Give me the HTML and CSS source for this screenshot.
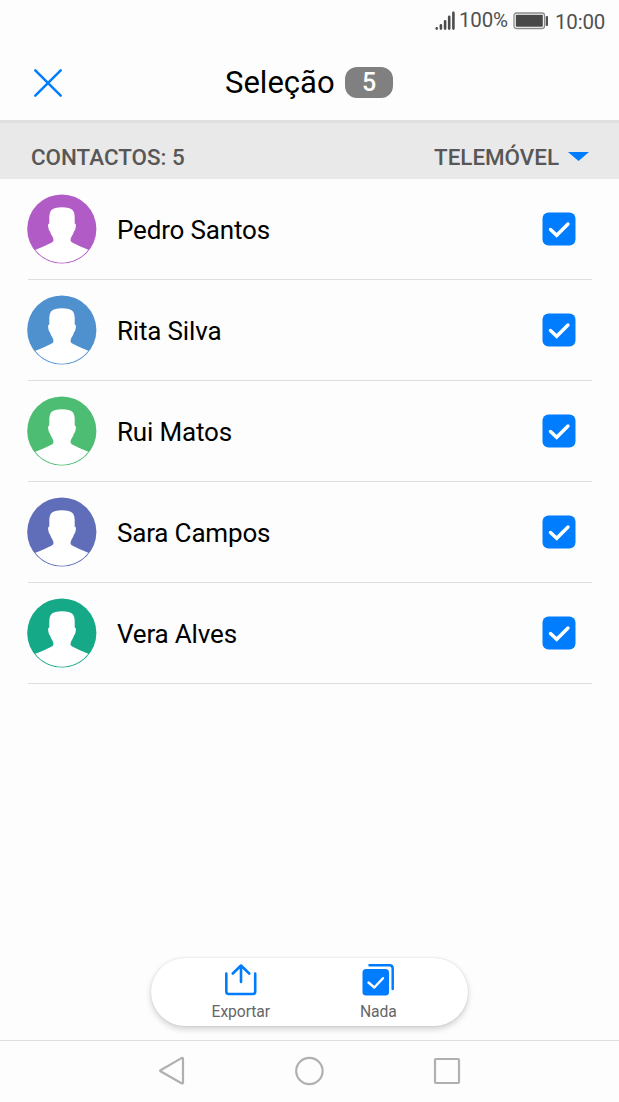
FILE: index.html
```html
<!DOCTYPE html>
<html lang="pt">
<head>
<meta charset="utf-8">
<title>Seleção</title>
<link rel="stylesheet" href="styles.css">
</head>
<body>
<svg class="defs" width="0" height="0">
  <symbol id="person" viewBox="0 0 70 70">
    <circle cx="34.800" cy="35" r="34.600" fill="currentColor"/>
    <path fill="#fff" d="M35 13.300C40 13.300 44 14 46 16.500Q47.800 19 47.700 23V29.500Q49.300 29.500 48.800 32.500Q48.200 36.800 47.200 37Q46.300 40 44.500 42.700Q43.500 44.500 43.500 46.500Q44 48 46.200 49Q52 52.200 61.300 55.700A33.600 33.600 0 0 1 8.300 55.700Q18 52.200 23.800 49Q26 48 26.500 46.500Q26.500 44.500 25.500 42.700Q23.700 40 22.800 37Q21.800 36.800 21.200 32.500Q20.700 29.500 22.300 29.500V23Q22.200 19 24 16.500C26 14 30 13.300 35 13.300Z"/>
  </symbol>
  <symbol id="check" viewBox="0 0 34 34">
    <rect x=".5" y=".5" width="33" height="33" rx="6" fill="#007dff"/>
    <path d="M8.500 17.500L14.700 23.300L26 12" fill="none" stroke="#fff" stroke-width="3.400" stroke-linecap="round"/>
  </symbol>
</svg>
<div class="screen">
  <div class="status">
    <svg class="signal" width="20" height="19" viewBox="0 0 20 19" stroke="#4c4c4c" stroke-width="2.600" stroke-linecap="round"><path d="M1.700 17.200V17.600M5.900 14.200V17.600M10.100 10.200V17.600M14.200 5.700V17.600M18.400 1.700V17.600"/></svg>
    <span class="percent">100%</span>
    <svg class="battery" width="36" height="18" viewBox="0 0 36 18"><rect x="1" y="1" width="30.500" height="15.500" rx="2.500" fill="#fff" stroke="#8a8a8a" stroke-width="1.300"/><rect x="2.800" y="2.800" width="27" height="12" rx=".8" fill="#484848"/><rect x="32.700" y="4" width="2.300" height="10" rx="1" fill="#505050"/></svg>
    <span class="clock">10:00</span>
  </div>
  <header class="header">
    <svg class="close" width="30" height="30" viewBox="0 0 30 30" stroke="#007dff" stroke-width="2.500" stroke-linecap="round"><path d="M2.300 2.300L27.700 27.700M27.700 2.300L2.300 27.700"/></svg>
    <h1 class="title">Seleção</h1>
    <span class="badge">5</span>
  </header>
  <div class="section">
    <span class="count">CONTACTOS: 5</span>
    <span class="source">TELEMÓVEL</span>
    <svg class="caret" width="21" height="9" viewBox="0 0 21 9"><path d="M0 0H21L10.500 9Z" fill="#007dff"/></svg>
  </div>
  <ul class="list">
    <li class="row"><svg class="avatar purple"><use href="#person"/></svg><span class="name">Pedro Santos</span><svg class="checkbox"><use href="#check"/></svg></li>
    <li class="row"><svg class="avatar blue"><use href="#person"/></svg><span class="name">Rita Silva</span><svg class="checkbox"><use href="#check"/></svg></li>
    <li class="row"><svg class="avatar green"><use href="#person"/></svg><span class="name">Rui Matos</span><svg class="checkbox"><use href="#check"/></svg></li>
    <li class="row"><svg class="avatar indigo"><use href="#person"/></svg><span class="name">Sara Campos</span><svg class="checkbox"><use href="#check"/></svg></li>
    <li class="row"><svg class="avatar teal"><use href="#person"/></svg><span class="name">Vera Alves</span><svg class="checkbox"><use href="#check"/></svg></li>
  </ul>
  <div class="toolbar">
    <div class="action">
      <svg width="34" height="34" viewBox="0 0 34 34" fill="none" stroke="#007dff" stroke-width="2.600" stroke-linecap="round" stroke-linejoin="round"><path d="M2.300 10.500V28.500Q2.300 31 4.800 31H28.700Q31.200 31 31.200 28.500V10.500M17 19V3M8.800 10.500L17 2.500L25.200 10.500"/></svg>
      <span class="label">Exportar</span>
    </div>
    <div class="action">
      <svg width="34" height="34" viewBox="0 0 34 34" fill="none" stroke-linecap="round" stroke-linejoin="round"><rect x="1.500" y="6" width="26.500" height="26.500" rx="3.500" fill="#007dff"/><path d="M8.500 2.300H28.500Q31.700 2.300 31.700 5.500V26" stroke="#007dff" stroke-width="2.500"/><path d="M7.500 19.500L13.300 24.500L22 15.200" stroke="#fff" stroke-width="2.400"/></svg>
      <span class="label">Nada</span>
    </div>
  </div>
  <nav class="nav">
    <svg width="28" height="32" viewBox="0 0 28 32" fill="none" stroke="#b0b0b0" stroke-width="2.200" stroke-linejoin="round"><path d="M2.500 15.200Q1.800 15.700 2.500 16.200L23.500 28.300Q25 29 25 27.500V3.900Q25 2.400 23.500 3.100Z"/></svg>
    <svg width="30" height="30" viewBox="0 0 30 30" fill="none" stroke="#b0b0b0" stroke-width="2.200"><circle cx="14.400" cy="15" r="13.200"/></svg>
    <svg width="28" height="28" viewBox="0 0 28 28" fill="none" stroke="#b0b0b0" stroke-width="2.200"><rect x="2" y="2" width="24" height="24" rx="1"/></svg>
  </nav>
</div>
</body>
</html>
```
FILE: styles.css
```css
* { box-sizing: border-box; }
body { margin: 0; background: #fdfdfd; font-family: Roboto, "Noto Sans", sans-serif; color: #000; }
svg { display: block; flex: none; }
.defs { position: absolute; }
.screen { width: 619px; height: 1102px; display: flex; flex-direction: column; overflow: hidden; }
.status { height: 44px; display: flex; align-items: flex-start; padding: 11px 0 0 435px; color: #505050; line-height: 20px; white-space: nowrap; }
.percent { width: 55px; padding-left: 4px; font-size: 20.5px; line-height: 19px; letter-spacing: -.2px; }
.battery { margin: 1px 0 0 3px; }
.clock { margin-left: 6px; font-size: 20.5px; line-height: 22px; letter-spacing: -.2px; }
.header { height: 76px; display: flex; align-items: center; padding: 1px 0 0 33px; }
.title { margin: 0 0 0 162px; width: 109px; font-weight: 400; font-size: 31px; line-height: 40px; white-space: nowrap; }
.badge { margin-left: 11px; width: 48px; height: 31px; border-radius: 12px; background: #808080; color: #fff; text-align: center; font-size: 25px; font-weight: 500; line-height: 31px; }
.section { height: 59px; border-top: 3px solid #e0e0e0; background: #e9e9e9; display: flex; align-items: center; padding: 12px 30px 0 31px; color: #575757; font-size: 22.4px; font-weight: 500; line-height: 30px; white-space: nowrap; }
.source { margin-left: auto; }
.caret { margin: -2px 0 0 9px; }
.list { list-style: none; margin: 0; padding: 0 27px; flex: 1; }
.row { height: 101px; display: flex; align-items: center; border-bottom: 1px solid #dedede; margin-left: 1px; padding-right: 16px; }
.avatar { width: 70px; height: 70px; margin-left: -1px; }
.checkbox { width: 34px; height: 34px; margin-left: auto; }
.name { margin-left: 20px; font-size: 26px; line-height: 32px; padding-top: 2px; letter-spacing: -.17px; }
.purple { color: #b05bc6; }
.blue { color: #4f90cf; }
.green { color: #4ebd74; }
.indigo { color: #606db9; }
.teal { color: #15a987; }
.toolbar { width: 317px; height: 68px; margin: 0 0 14px 151px; border-radius: 34px; background: #fff; box-shadow: 0 3px 6px rgba(0,0,0,.18), 0 0 2px rgba(0,0,0,.12); display: flex; padding: 5px 21px 0; }
.action { flex: 1; display: flex; flex-direction: column; align-items: center; }
.label { margin-top: 5px; font-size: 15.7px; line-height: 19px; letter-spacing: -.1px; color: #666; }
.nav { height: 62px; border-top: 1px solid #dedede; display: flex; justify-content: space-between; align-items: center; padding: 0 158px 2px; }
```
